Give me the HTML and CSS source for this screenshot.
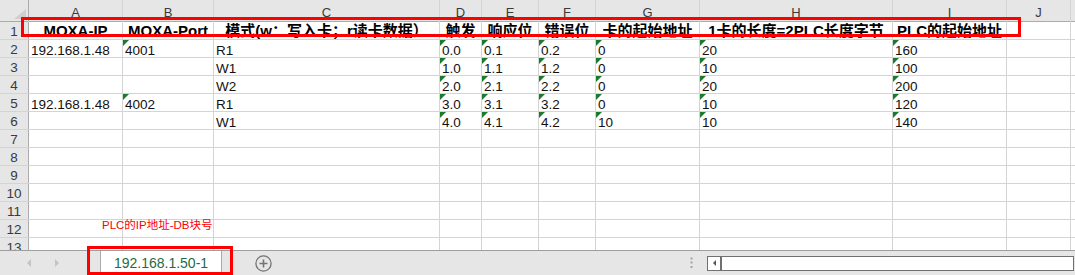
FILE: index.html
```html
<!DOCTYPE html>
<html lang="zh-CN">
<head>
  <meta charset="UTF-8" />
  <title>192.168.1.50-1</title>
  <link rel="stylesheet" href="styles.css">
</head>
<body>
  <div class="sheet">
    <div class="grid">
      <div class="corner"></div>
      <div class="col">A</div><div class="col">B</div><div class="col">C</div><div class="col">D</div><div class="col">E</div>
      <div class="col">F</div><div class="col">G</div><div class="col">H</div><div class="col">I</div><div class="col">J</div><div class="col"></div>

      <div class="rh">1</div>
      <div class="c hd">MOXA-IP</div><div class="c hd">MOXA-Port</div><div class="c hd">模式(w：写入卡；r读卡数据）</div>
      <div class="c hd">触发</div><div class="c hd">响应位</div><div class="c hd">错误位</div><div class="c hd">卡的起始地址</div>
      <div class="c hd">1卡的长度=2PLC长度字节</div><div class="c hd">PLC的起始地址</div><div class="c"></div><div class="c"></div>

      <div class="rh">2</div>
      <div class="c">192.168.1.48</div><div class="c txt">4001</div><div class="c">R1</div>
      <div class="c txt">0.0</div><div class="c txt">0.1</div><div class="c txt">0.2</div><div class="c txt">0</div>
      <div class="c txt">20</div><div class="c txt">160</div><div class="c"></div><div class="c"></div>

      <div class="rh">3</div>
      <div class="c"></div><div class="c"></div><div class="c">W1</div>
      <div class="c txt">1.0</div><div class="c txt">1.1</div><div class="c txt">1.2</div><div class="c txt">0</div>
      <div class="c txt">10</div><div class="c txt">100</div><div class="c"></div><div class="c"></div>

      <div class="rh">4</div>
      <div class="c"></div><div class="c"></div><div class="c">W2</div>
      <div class="c txt">2.0</div><div class="c txt">2.1</div><div class="c txt">2.2</div><div class="c txt">0</div>
      <div class="c txt">20</div><div class="c txt">200</div><div class="c"></div><div class="c"></div>

      <div class="rh">5</div>
      <div class="c">192.168.1.48</div><div class="c txt">4002</div><div class="c">R1</div>
      <div class="c txt">3.0</div><div class="c txt">3.1</div><div class="c txt">3.2</div><div class="c txt">0</div>
      <div class="c txt">10</div><div class="c txt">120</div><div class="c"></div><div class="c"></div>

      <div class="rh">6</div>
      <div class="c"></div><div class="c"></div><div class="c">W1</div>
      <div class="c txt">4.0</div><div class="c txt">4.1</div><div class="c txt">4.2</div><div class="c txt">10</div>
      <div class="c txt">10</div><div class="c txt">140</div><div class="c"></div><div class="c"></div>

      <div class="rh">7</div>
      <div class="c"></div><div class="c"></div><div class="c"></div><div class="c"></div><div class="c"></div><div class="c"></div>
      <div class="c"></div><div class="c"></div><div class="c"></div><div class="c"></div><div class="c"></div>

      <div class="rh">8</div>
      <div class="c"></div><div class="c"></div><div class="c"></div><div class="c"></div><div class="c"></div><div class="c"></div>
      <div class="c"></div><div class="c"></div><div class="c"></div><div class="c"></div><div class="c"></div>

      <div class="rh">9</div>
      <div class="c"></div><div class="c"></div><div class="c"></div><div class="c"></div><div class="c"></div><div class="c"></div>
      <div class="c"></div><div class="c"></div><div class="c"></div><div class="c"></div><div class="c"></div>

      <div class="rh">10</div>
      <div class="c"></div><div class="c"></div><div class="c"></div><div class="c"></div><div class="c"></div><div class="c"></div>
      <div class="c"></div><div class="c"></div><div class="c"></div><div class="c"></div><div class="c"></div>

      <div class="rh">11</div>
      <div class="c"></div><div class="c"></div><div class="c"></div><div class="c"></div><div class="c"></div><div class="c"></div>
      <div class="c"></div><div class="c"></div><div class="c"></div><div class="c"></div><div class="c"></div>

      <div class="rh">12</div>
      <div class="c"></div><div class="c"></div><div class="c"></div><div class="c"></div><div class="c"></div><div class="c"></div>
      <div class="c"></div><div class="c"></div><div class="c"></div><div class="c"></div><div class="c"></div>

      <div class="rh">13</div>
      <div class="c"></div><div class="c"></div><div class="c"></div><div class="c"></div><div class="c"></div><div class="c"></div>
      <div class="c"></div><div class="c"></div><div class="c"></div><div class="c"></div><div class="c"></div>
    </div>

    <div class="mark mark-head"></div>
    <div class="note">PLC的IP地址-DB块号</div>
  </div>

  <div class="tabbar">
    <div class="nav">
      <span class="arrow arrow-left"></span>
      <span class="arrow arrow-right"></span>
    </div>
    <div class="tab">192.168.1.50-1</div>
    <svg class="add" width="17" height="17" viewBox="0 0 17 17">
      <circle cx="8.5" cy="8.5" r="7.6" fill="none" stroke="#737373" stroke-width="1.3"/>
      <path d="M8.5 4.5v8M4.5 8.5h8" stroke="#737373" stroke-width="1.6"/>
    </svg>
    <div class="spacer"></div>
    <svg class="dots" width="3" height="12" viewBox="0 0 3 12">
      <rect x="0.5" y="0.5" width="2" height="2" fill="#a3a3a3"/>
      <rect x="0.5" y="4.5" width="2" height="2" fill="#a3a3a3"/>
      <rect x="0.5" y="9" width="2" height="2" fill="#a3a3a3"/>
    </svg>
    <div class="hscroll">
      <div class="hscroll-btn"><span class="mini-left"></span></div>
    </div>
    <div class="mark mark-tab"></div>
  </div>
</body>
</html>
```

FILE: styles.css
```css
html, body {
  margin: 0;
  padding: 0;
  width: 1075px;
  height: 275px;
  overflow: hidden;
  background: #fff;
  font-family: "Liberation Sans", "Noto Sans CJK SC", sans-serif;
  color: #111;
}

.sheet {
  position: relative;
  height: 250px;
  overflow: hidden;
}

.grid {
  display: grid;
  grid-template-columns: 28px 93px 90px 225px 41px 56px 56px 103px 192px 113px 63px 1fr;
  grid-template-rows: 21px repeat(13, 17px);
  gap: 1px;
  background: #d4d4d4;
}

.corner, .col, .rh {
  background: #e6e6e6;
  color: #3a3a3a;
}

.corner {
  position: relative;
  box-shadow: 1px 0 0 #ababab, 0 1px 0 #ababab;
}

.corner::after {
  content: "";
  position: absolute;
  right: 2px;
  bottom: 2px;
  border-left: 12px solid transparent;
  border-bottom: 10px solid #cfcfcf;
}

.col {
  font-size: 13px;
  line-height: 25px;
  text-align: center;
  overflow: hidden;
  box-shadow: 0 1px 0 #ababab;
}

.rh {
  font-size: 13.5px;
  line-height: 17px;
  padding-top: 1px;
  text-align: center;
  overflow: hidden;
  box-shadow: 1px 0 0 #ababab;
}

.c {
  position: relative;
  background: #fff;
  font-size: 13.5px;
  line-height: 17px;
  padding: 2px 0 0 2px;
  box-sizing: border-box;
  white-space: nowrap;
  overflow: hidden;
}

.c.hd {
  font-size: 15px;
  font-weight: bold;
  text-align: center;
  padding: 0;
  color: #000;
}

/* green number-stored-as-text flag */
.c.txt::before {
  content: "";
  position: absolute;
  top: 0;
  left: 0;
  border-top: 6px solid #1a7a2e;
  border-right: 6px solid transparent;
}

.mark {
  position: absolute;
  border: 3px solid #f00;
  box-sizing: border-box;
  pointer-events: none;
}

.mark-head {
  left: 21px;
  top: 17px;
  width: 1000px;
  height: 20px;
}

.note {
  position: absolute;
  left: 102px;
  top: 218px;
  font-size: 11.5px;
  line-height: 14px;
  color: #f00;
  white-space: nowrap;
}

.tabbar {
  position: relative;
  display: flex;
  align-items: stretch;
  height: 25px;
  box-sizing: border-box;
  border-top: 1px solid #9e9e9e;
  background: #e6e6e6;
}

.nav {
  width: 100px;
  display: flex;
  align-items: center;
  padding-left: 27px;
  gap: 24px;
  box-sizing: border-box;
}

.arrow {
  width: 0;
  height: 0;
  border-top: 4px solid transparent;
  border-bottom: 4px solid transparent;
}

.arrow-left {
  border-right: 4px solid #c4c4c4;
}

.arrow-right {
  border-left: 4px solid #c4c4c4;
}

.tab {
  width: 122px;
  box-sizing: border-box;
  background: #fff;
  border-left: 1px solid #ababab;
  border-right: 1px solid #ababab;
  color: #1f6b42;
  font-size: 14px;
  display: flex;
  align-items: center;
  justify-content: center;
}

.add {
  align-self: center;
  margin-left: 33px;
}

.spacer {
  flex: 1;
}

.dots {
  align-self: center;
  margin-right: 14px;
}

.hscroll {
  align-self: center;
  width: 367px;
  height: 15px;
  margin-right: 1px;
  box-sizing: border-box;
  border: 1px solid #707070;
  background: #fff;
  display: flex;
}

.hscroll-btn {
  width: 14px;
  box-sizing: border-box;
  border-right: 2px solid #707070;
  display: flex;
  align-items: center;
  justify-content: center;
}

.mini-left {
  width: 0;
  height: 0;
  border-top: 3px solid transparent;
  border-bottom: 3px solid transparent;
  border-right: 3px solid #555;
}

.mark-tab {
  left: 87px;
  top: -5px;
  width: 146px;
  height: 29px;
}
```
